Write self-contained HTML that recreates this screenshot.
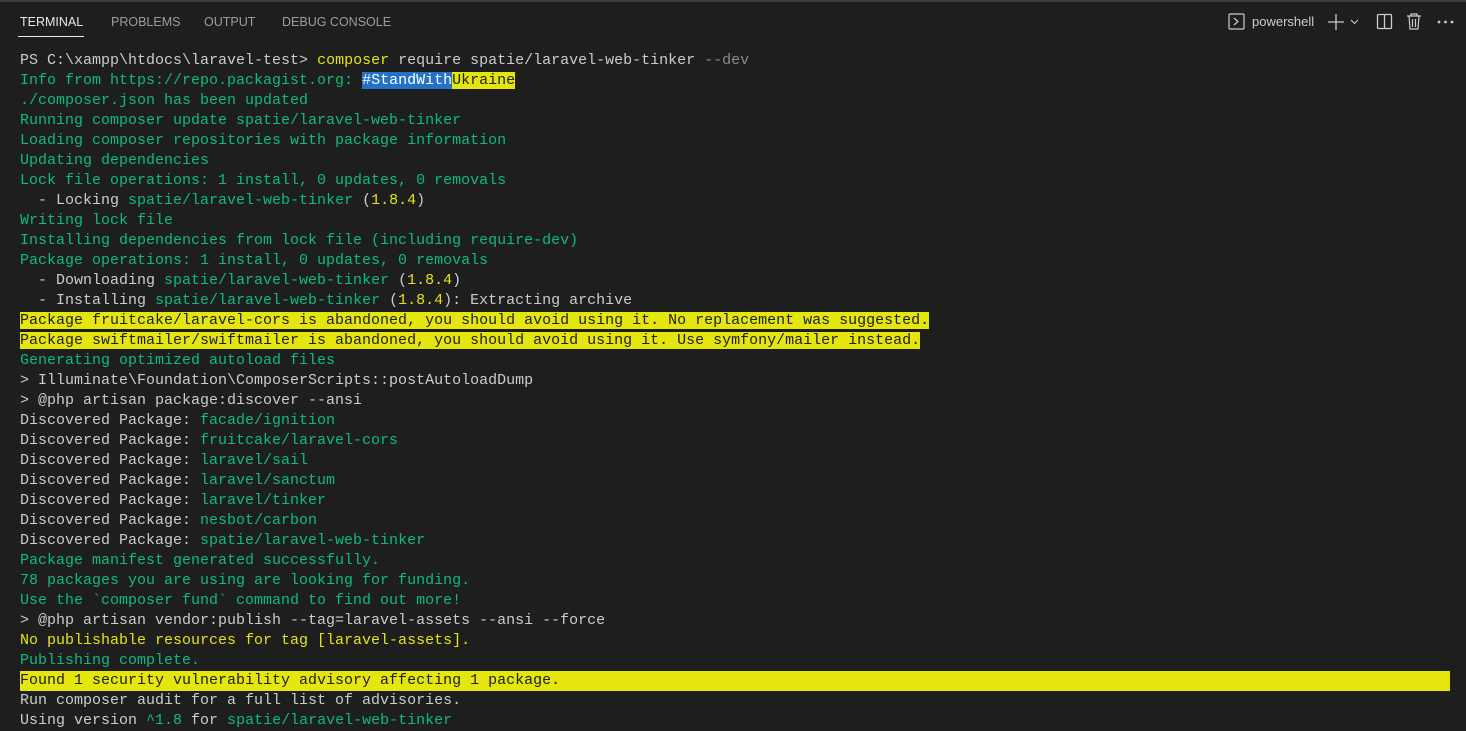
<!DOCTYPE html>
<html><head><meta charset="utf-8"><style>
body{margin:0;width:1466px;height:731px;background:#1e1e1e;overflow:hidden;position:relative;font-family:"Liberation Sans",sans-serif}
.top{position:absolute;left:0;top:0;width:1466px;height:2px;background:#3c3c3c}
.tabs{position:absolute;top:15px;left:20px;font-size:12.5px;color:#9d9d9d;letter-spacing:0}
.tabs span{position:absolute;white-space:nowrap}
.ul{position:absolute;left:18px;top:36px;width:66px;height:1px;background:#e7e7e7}
.term{position:absolute;left:20px;top:51px;font-family:"Liberation Mono",monospace;font-size:15px;line-height:20px;color:#cccccc}
.term div{height:20px;white-space:pre}
.g{color:#0dbc79}.y{color:#e5e510}.d{color:#8b8b8b}
.hl{background:#e5e510;color:#1e1e1e}
.sel{background:#2472c8;color:#fff}
.icons{position:absolute;top:12px;color:#ccc;font-size:13px}
</style></head><body>
<div class="top"></div>
<div class="tabs">
<span style="left:0;color:#e7e7e7">TERMINAL</span>
<span style="left:91px">PROBLEMS</span>
<span style="left:184px">OUTPUT</span>
<span style="left:262px">DEBUG CONSOLE</span>
</div>
<div class="ul"></div>
<svg style="position:absolute;left:1228px;top:13px" width="18" height="18" viewBox="0 0 18 18" fill="none" stroke="#ccc" stroke-width="1.2"><rect x="1" y="1" width="15" height="15" rx="1"/><path d="M6 5l4 3.5L6 12"/></svg>
<div class="icons" style="left:1252px;top:14px;font-size:13px;color:#ccc">powershell</div>
<svg style="position:absolute;left:1327px;top:13px" width="36" height="18" viewBox="0 0 36 18" fill="none" stroke="#ccc" stroke-width="1.3"><path d="M9 1v16M1 9h16"/><path d="M24 7l3.5 3.5L31 7" stroke-width="1"/></svg>
<svg style="position:absolute;left:1376px;top:13px" width="18" height="18" viewBox="0 0 18 18" fill="none" stroke="#ccc" stroke-width="1.3"><rect x="1.5" y="1.5" width="14" height="14" rx="1"/><path d="M8.5 1.5v14"/></svg>
<svg style="position:absolute;left:1406px;top:12px" width="16" height="18" viewBox="0 0 16 18" fill="none" stroke="#ccc" stroke-width="1.2"><path d="M1 4h14M5 4V2h6v2M3 4l1 13h8l1-13M6.5 7v8M9.5 7v8"/></svg>
<svg style="position:absolute;left:1437px;top:20px" width="18" height="4" viewBox="0 0 18 4" fill="#ccc"><circle cx="2" cy="2" r="1.4"/><circle cx="8.5" cy="2" r="1.4"/><circle cx="15" cy="2" r="1.4"/></svg>
<div class="term"><div>PS C:\xampp\htdocs\laravel-test&gt; <span class="y">composer</span> require spatie/laravel-web-tinker <span class="d">--dev</span></div><div class="g">Info from https://repo.packagist.org: <span class="sel">#StandWith</span><span class="hl">Ukraine</span></div><div class="g">./composer.json has been updated</div><div class="g">Running composer update spatie/laravel-web-tinker</div><div class="g">Loading composer repositories with package information</div><div class="g">Updating dependencies</div><div class="g">Lock file operations: 1 install, 0 updates, 0 removals</div><div>  - Locking <span class="g">spatie/laravel-web-tinker</span> (<span class="y">1.8.4</span>)</div><div class="g">Writing lock file</div><div class="g">Installing dependencies from lock file (including require-dev)</div><div class="g">Package operations: 1 install, 0 updates, 0 removals</div><div>  - Downloading <span class="g">spatie/laravel-web-tinker</span> (<span class="y">1.8.4</span>)</div><div>  - Installing <span class="g">spatie/laravel-web-tinker</span> (<span class="y">1.8.4</span>): Extracting archive</div><div><span class="hl">Package fruitcake/laravel-cors is abandoned, you should avoid using it. No replacement was suggested.</span></div><div><span class="hl">Package swiftmailer/swiftmailer is abandoned, you should avoid using it. Use symfony/mailer instead.</span></div><div class="g">Generating optimized autoload files</div><div>&gt; Illuminate\Foundation\ComposerScripts::postAutoloadDump</div><div>&gt; @php artisan package:discover --ansi</div><div>Discovered Package: <span class="g">facade/ignition</span></div><div>Discovered Package: <span class="g">fruitcake/laravel-cors</span></div><div>Discovered Package: <span class="g">laravel/sail</span></div><div>Discovered Package: <span class="g">laravel/sanctum</span></div><div>Discovered Package: <span class="g">laravel/tinker</span></div><div>Discovered Package: <span class="g">nesbot/carbon</span></div><div>Discovered Package: <span class="g">spatie/laravel-web-tinker</span></div><div class="g">Package manifest generated successfully.</div><div class="g">78 packages you are using are looking for funding.</div><div class="g">Use the `composer fund` command to find out more!</div><div>&gt; @php artisan vendor:publish --tag=laravel-assets --ansi --force</div><div class="y">No publishable resources for tag [laravel-assets].</div><div class="g">Publishing complete.</div><div class="hl" style="width:1430px">Found 1 security vulnerability advisory affecting 1 package.</div><div>Run composer audit for a full list of advisories.</div><div>Using version <span class="g">^1.8</span> for <span class="g">spatie/laravel-web-tinker</span></div></div>
</body></html>
